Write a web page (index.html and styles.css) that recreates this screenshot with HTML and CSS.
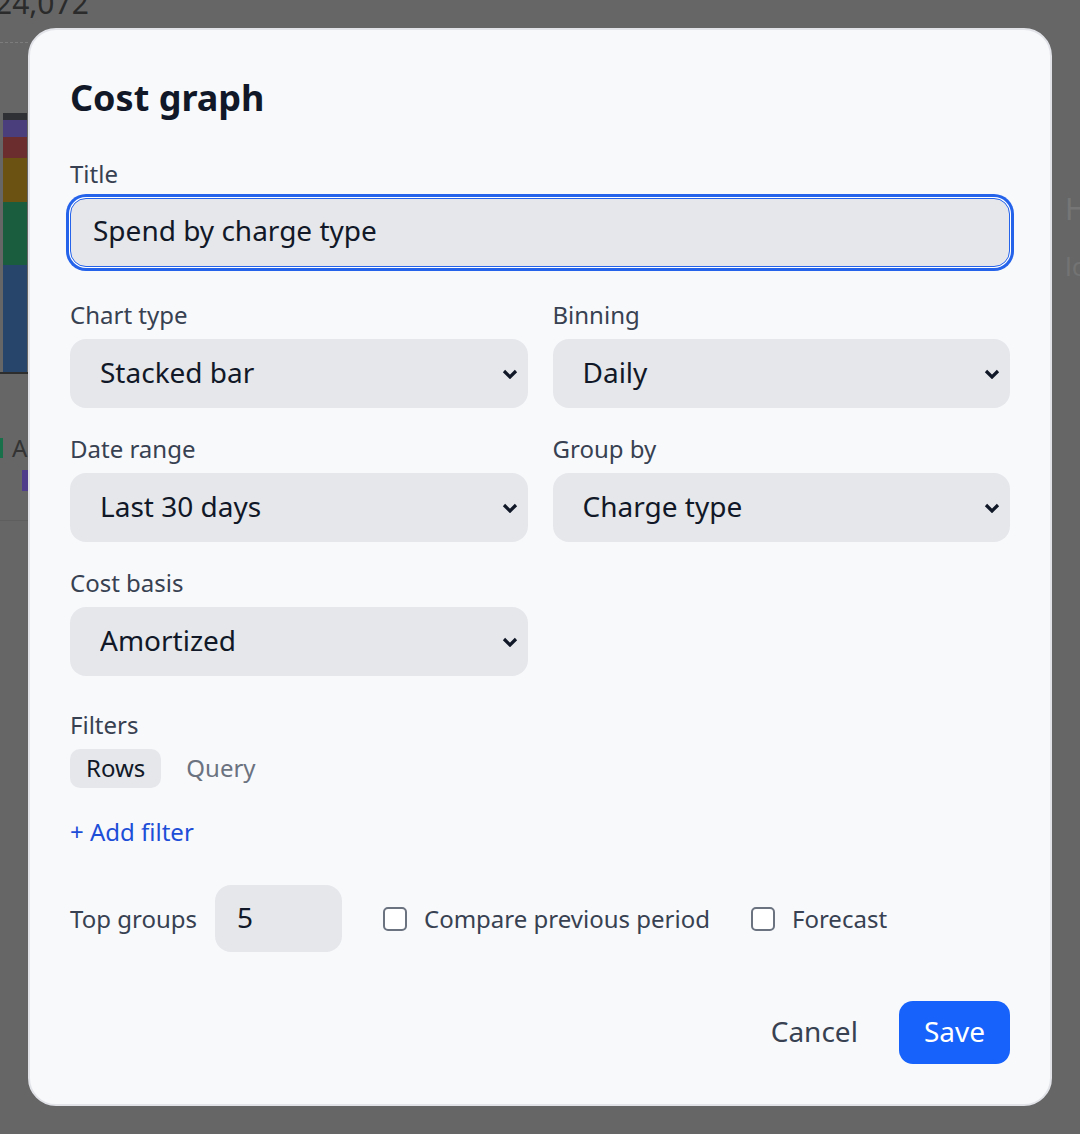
FILE: index.html
```html
<!DOCTYPE html>
<html lang="en">
<head>
  <meta charset="UTF-8">
  <meta name="viewport" content="width=device-width, initial-scale=1.0">
  <title>Cost graph</title>
  <link rel="stylesheet" href="styles.css">
</head>
<body>
  <!-- Dashboard behind the modal -->
  <div class="page">
    <div class="chart-col">
      <div class="metric">24,072</div>
      <div class="chart">
        <div class="bar">
          <div class="seg seg-other"></div>
          <div class="seg seg-purple"></div>
          <div class="seg seg-red"></div>
          <div class="seg seg-yellow"></div>
          <div class="seg seg-green"></div>
          <div class="seg seg-blue"></div>
        </div>
      </div>
      <div class="legend">
        <div class="legend-item"><span class="swatch swatch-green"></span>A</div>
        <div class="legend-item legend-indent"><span class="swatch swatch-purple"></span></div>
      </div>
      <div class="rule"></div>
    </div>
    <div class="side-col">
      <div class="side-heading">H</div>
      <div class="side-text">lo</div>
    </div>
  </div>

  <!-- Modal -->
  <div class="modal-layer">
    <div class="dialog">
      <h2 class="dialog-title">Cost graph</h2>

      <div class="field field-title">
        <label for="graphTitle">Title</label>
        <input type="text" id="graphTitle" class="text-input focused" value="Spend by charge type">
      </div>

      <div class="grid">
        <div class="field">
          <label for="chartType">Chart type</label>
          <div class="select-wrap">
            <select id="chartType"><option>Stacked bar</option><option>Line</option></select>
            <svg class="chevron" viewBox="0 0 16 10"><polyline points="2,2 8,8 14,2"/></svg>
          </div>
        </div>
        <div class="field">
          <label for="binning">Binning</label>
          <div class="select-wrap">
            <select id="binning"><option>Daily</option><option>Monthly</option></select>
            <svg class="chevron" viewBox="0 0 16 10"><polyline points="2,2 8,8 14,2"/></svg>
          </div>
        </div>
        <div class="field">
          <label for="dateRange">Date range</label>
          <div class="select-wrap">
            <select id="dateRange"><option>Last 30 days</option><option>Last 90 days</option></select>
            <svg class="chevron" viewBox="0 0 16 10"><polyline points="2,2 8,8 14,2"/></svg>
          </div>
        </div>
        <div class="field">
          <label for="groupBy">Group by</label>
          <div class="select-wrap">
            <select id="groupBy"><option>Charge type</option><option>Service</option></select>
            <svg class="chevron" viewBox="0 0 16 10"><polyline points="2,2 8,8 14,2"/></svg>
          </div>
        </div>
        <div class="field">
          <label for="costBasis">Cost basis</label>
          <div class="select-wrap">
            <select id="costBasis"><option>Amortized</option><option>Unblended</option></select>
            <svg class="chevron" viewBox="0 0 16 10"><polyline points="2,2 8,8 14,2"/></svg>
          </div>
        </div>
      </div>

      <div class="filters">
        <label>Filters</label>
        <div class="tabs">
          <button class="tab active">Rows</button>
          <button class="tab">Query</button>
        </div>
        <button class="add-filter">+ Add filter</button>
      </div>

      <div class="options">
        <div class="top-groups">
          <label for="topGroups">Top groups</label>
          <input type="text" id="topGroups" class="number-input" value="5">
        </div>
        <label class="check"><input type="checkbox"> Compare previous period</label>
        <label class="check"><input type="checkbox"> Forecast</label>
      </div>

      <div class="actions">
        <button class="btn-cancel">Cancel</button>
        <button class="btn-save">Save</button>
      </div>
    </div>
  </div>
</body>
</html>
```

FILE: styles.css
```css
body {
  margin: 0;
  padding: 0;
  background-color: #666666;
  font-family: "Noto Sans", sans-serif;
  height: 100vh;
  overflow: hidden;
}

/* background dashboard (already dimmed) */
.page {
  display: flex;
  justify-content: space-between;
  height: 100%;
  overflow: hidden;
}
.chart-col {
  width: 28px;
}
.metric {
  font-size: 30px;
  line-height: 30px;
  color: #2b2b2b;
  margin: -12px 0 0 -5px;
  white-space: nowrap;
}
.chart {
  margin-top: 24px;
  height: 329px;
  border-top: 1px dashed #7c7c7c;
  border-bottom: 2px solid #2d2d2d;
  display: flex;
  align-items: flex-end;
}
.bar {
  width: 24px;
  margin-left: 3px;
}
.seg-other { height: 7px; background: #2e3036; }
.seg-purple { height: 17px; background: #4a3f7c; }
.seg-red { height: 21px; background: #6b2d2e; }
.seg-yellow { height: 44px; background: #6b5112; }
.seg-green { height: 63px; background: #195c3e; }
.seg-blue { height: 107px; background: #27446a; }
.legend {
  margin-top: 62px;
  overflow: hidden;
}
.legend-item {
  display: flex;
  align-items: center;
  gap: 9px;
  font-size: 24px;
  line-height: 24px;
  color: #333333;
  white-space: nowrap;
  margin-left: -9px;
}
.legend-indent {
  margin: 10px 0 0 22px;
}
.swatch {
  display: inline-block;
  flex-shrink: 0;
  width: 12px;
  height: 20px;
}
.swatch-green { background: #17704a; }
.swatch-purple { background: #4f3d8c; height: 21px; }
.rule {
  margin-top: 29px;
  border-top: 1px solid #5e5e5e;
}
.side-col {
  width: 28px;
  padding: 192px 0 0 13px;
  box-sizing: border-box;
  overflow: hidden;
  white-space: nowrap;
}
.side-heading {
  font-size: 30px;
  line-height: 34px;
  color: #767676;
}
.side-text {
  margin-top: 26px;
  font-size: 26px;
  line-height: 28px;
  color: #737373;
}

/* modal */
.modal-layer {
  position: fixed;
  inset: 0;
  display: flex;
  align-items: center;
  justify-content: center;
}
.dialog {
  width: 1024px;
  box-sizing: border-box;
  background-color: #f8f9fb;
  border: 2px solid #e1e3e8;
  border-radius: 28px;
  padding: 46px 40px 40px;
}
.dialog-title {
  margin: 0 0 38px;
  font-size: 36px;
  line-height: 44px;
  font-weight: 700;
  color: #111827;
}
.dialog label,
.filters label {
  display: block;
  font-size: 24px;
  line-height: 32px;
  color: #374151;
}
.field label,
.filters > label {
  margin-bottom: 8px;
}
.field-title {
  margin-bottom: 32px;
}
.text-input {
  display: block;
  width: 100%;
  height: 69px;
  box-sizing: border-box;
  padding: 0 22px 5px;
  border: 1px solid transparent;
  border-radius: 16px;
  background-color: #e5e7eb;
  font-family: inherit;
  font-size: 28px;
  color: #111827;
  outline: none;
}
.text-input.focused {
  border-color: #2563eb;
  box-shadow: 0 0 0 1px #ffffff, 0 0 0 4px #2563eb;
}
.grid {
  display: grid;
  grid-template-columns: 1fr 1fr;
  column-gap: 25px;
  row-gap: 25px;
}
.select-wrap {
  position: relative;
}
.select-wrap select {
  display: block;
  width: 100%;
  height: 69px;
  padding: 0 50px 4px 30px;
  border: none;
  border-radius: 16px;
  background-color: #e5e7eb;
  appearance: none;
  -webkit-appearance: none;
  font-family: inherit;
  font-size: 28px;
  color: #111827;
}
.chevron {
  position: absolute;
  right: 10px;
  top: 50%;
  width: 16px;
  height: 10px;
  transform: translateY(-50%);
  pointer-events: none;
  fill: none;
  stroke: #111827;
  stroke-width: 3.2;
}

.filters {
  margin-top: 33px;
}
.tabs {
  display: flex;
  gap: 9px;
}
.tab {
  padding: 3px 16px 4px;
  border: none;
  border-radius: 10px;
  background: none;
  font-family: inherit;
  font-size: 24px;
  line-height: 32px;
  color: #6b7280;
  cursor: pointer;
}
.tab.active {
  background-color: #e5e7eb;
  color: #111827;
}
.add-filter {
  display: block;
  margin-top: 28px;
  padding: 0;
  border: none;
  background: none;
  font-family: inherit;
  font-size: 24px;
  line-height: 32px;
  color: #1d4ed8;
  cursor: pointer;
}

.options {
  margin-top: 37px;
  display: flex;
  align-items: center;
  gap: 41px;
}
.top-groups {
  display: flex;
  align-items: center;
  gap: 18px;
}
.number-input {
  width: 127px;
  height: 67px;
  box-sizing: border-box;
  padding: 0 22px 4px;
  border: none;
  border-radius: 16px;
  background-color: #e5e7eb;
  font-family: inherit;
  font-size: 28px;
  color: #111827;
}
.dialog .check {
  display: flex;
  align-items: center;
  gap: 17px;
}
.check input {
  appearance: none;
  -webkit-appearance: none;
  width: 24px;
  height: 24px;
  margin: 0;
  border: 2px solid #6b7280;
  border-radius: 5px;
  background: #ffffff;
}

.actions {
  margin-top: 49px;
  display: flex;
  justify-content: flex-end;
  gap: 16px;
}
.actions button {
  height: 63px;
  padding: 0 25px 4px;
  border: none;
  border-radius: 14px;
  font-family: inherit;
  font-size: 28px;
  cursor: pointer;
}
.btn-cancel {
  background: none;
  color: #374151;
}
.btn-save {
  background-color: #1662fb;
  color: #ffffff;
}
.btn-save:hover {
  background-color: #0f52d9;
}
```
